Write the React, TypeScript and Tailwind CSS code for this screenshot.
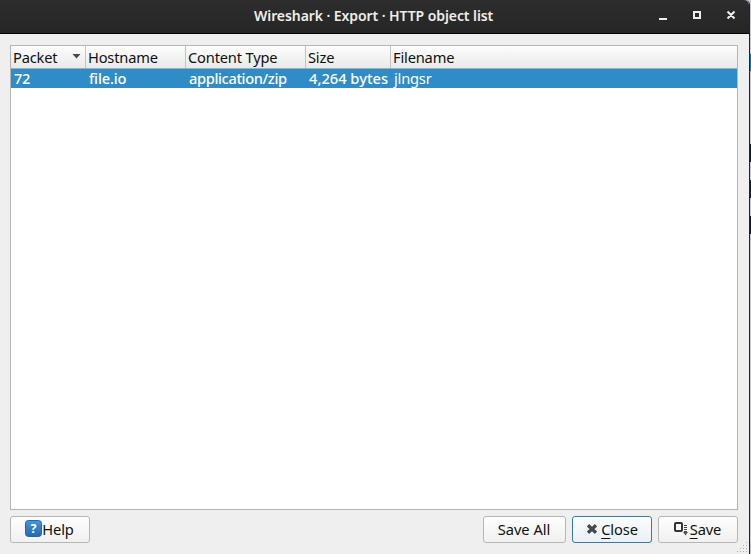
import React from "react";

const columns = [
  { label: "Packet", width: "w-[75px]", value: "72", tracking: "tracking-[-0.3px]", sorted: true },
  { label: "Hostname", width: "w-[100px]", value: "file.io", tracking: "tracking-[-0.15px]" },
  { label: "Content Type", width: "w-[120px]", value: "application/zip", tracking: "tracking-[-0.38px]" },
  { label: "Size", width: "w-[85px]", value: "4,264 bytes", tracking: "tracking-normal" },
  { label: "Filename", width: "flex-1", value: "jlngsr", tracking: "tracking-[-0.2px]" },
];

function TitleBar() {
  return (
    <header className="flex h-[34px] shrink-0 items-center rounded-tr-[5px] border-b border-black bg-gradient-to-b from-[#2d2d2d] to-[#262626] pl-[254px] pr-[13px]">
      <h1 className="w-[240px] whitespace-nowrap pb-[2px] text-[14px] font-semibold tracking-[-0.08px] text-[#eeeeec]">
        Wireshark · Export · HTTP object list
      </h1>
      <svg className="mb-[3px] ml-auto" width="78" height="12" viewBox="0 0 78 12" fill="none" stroke="#eeeeec" strokeWidth="2">
        <path d="M1 10h8M36 3h6v6h-6zM69.5 2.5l7 7M76.5 2.5l-7 7" />
      </svg>
    </header>
  );
}

function ObjectTable() {
  return (
    <div className="flex flex-1 flex-col border border-[#b4b4b4] bg-white">
      <div className="flex h-[23px] border-b border-[#a9adb0] bg-gradient-to-b from-[#fdfdfd] to-[#e9e9e9]">
        {columns.map((c, i) => (
          <div key={c.label} className={`${c.width} flex items-center justify-between pl-[2px] ${i < 4 ? "border-r border-[#c4c4c4]" : ""}`}>
            <span className="whitespace-nowrap leading-[22px] tracking-[-0.18px]">{c.label}</span>
            {c.sorted && (
              <svg className="mb-[2px] mr-[4px]" width="9" height="5" viewBox="0 0 9 5"><path d="M.5 0h8l-4 4.5z" fill="#4a4a4a" /></svg>
            )}
          </div>
        ))}
      </div>
      <div className="flex h-[19px] bg-[#308cc6] text-white">
        {columns.map((c, i) => (
          <div key={c.label} className={`${c.width} ${c.tracking} ${i < 4 ? "font-medium" : ""} whitespace-nowrap pl-[3px] leading-[19px]`}>{c.value}</div>
        ))}
      </div>
    </div>
  );
}

const button = "flex h-[27px] items-center justify-center rounded-[3px] border bg-gradient-to-b pb-[2px] whitespace-nowrap tracking-[-0.1px]";
const plain = "border-[#b6b6b6] from-[#fefefe] to-[#f1f1f1]";

function Mnemonic({ first, rest }: { first: string; rest: string }) {
  return (
    <span>
      <span className="underline decoration-1 underline-offset-[3px]">{first}</span>
      {rest}
    </span>
  );
}

export default function App() {
  return (
    <div className="flex h-[554px] w-[751px] overflow-hidden bg-[#c9c8d0] font-['Noto_Sans',sans-serif] text-[14.67px] text-[#101010]">
      <div className="flex w-[750px] flex-col rounded-tr-[5px] border-r border-[#202226] bg-[#efefef]">
        <TitleBar />
        <main className="flex flex-1 flex-col pl-[10px] pr-[11px] pt-[11px]">
          <ObjectTable />
          <footer className="relative flex h-[44px] pt-[6px]">
            <button className={`${button} ${plain} w-[80px] pr-px`}>
              <svg width="17" height="17" viewBox="0 0 17 17">
                <defs>
                  <linearGradient id="help" x2="0" y2="1">
                    <stop stopColor="#4796db" />
                    <stop offset="1" stopColor="#2368b4" />
                  </linearGradient>
                </defs>
                <rect x=".5" y=".5" width="16" height="16" rx="3" fill="url(#help)" stroke="#2765a8" />
                <text x="8.5" y="13" textAnchor="middle" fontSize="12.5" fontWeight="700" fill="white">?</text>
              </svg>
              Help
            </button>
            <button className={`${button} ${plain} ml-auto w-[83px] pr-px tracking-normal`}>Save All</button>
            <button className={`${button} ml-[6px] w-[80px] border-[#3b7aa5] from-[#fbfdfe] to-[#e9f0f6]`}>
              <svg className="mr-[3px]" width="12" height="10" viewBox="0 0 12 10"><path d="M2 1.3l8 7.4M10 1.3L2 8.7" stroke="#45494b" strokeWidth="3.3" /></svg>
              <Mnemonic first="C" rest="lose" />
            </button>
            <button className={`${button} ${plain} ml-[6px] w-[80px] pr-px`}>
              <svg className="mr-px" width="15" height="15" viewBox="0 0 15 15" fill="none">
                <rect x="1" y="2" width="7" height="8" rx="1" stroke="#333" strokeWidth="2" />
                <path d="M10 4.5h3M10 6.5h3M10 8.5h3M10 10.5h3" stroke="#444" />
                <path d="M9 11h5l-2.5 3.5z" fill="#555" />
              </svg>
              <Mnemonic first="S" rest="ave" />
            </button>
            <svg className="absolute -right-[10px] bottom-[1px]" width="11" height="11" viewBox="0 0 11 11" fill="#b0b0b0">
              <path d="M9 0h1v1h-1zM6 3h1v1h-1zM9 3h1v1h-1zM3 6h1v1h-1zM6 6h1v1h-1zM9 6h1v1h-1zM0 9h1v1h-1zM3 9h1v1h-1zM6 9h1v1h-1zM9 9h1v1h-1z" />
            </svg>
          </footer>
        </main>
      </div>
      <div className="flex w-px flex-col">
        <div className="mt-[54px] h-[17px] bg-[#1a75a7]" />
        <div className="mt-[73px] h-[18px] bg-[#101d2a]" />
        <div className="mt-[18px] h-[18px] bg-[#101d2a]" />
        <div className="mt-[18px] h-[18px] bg-[#101d2a]" />
      </div>
    </div>
  );
}
